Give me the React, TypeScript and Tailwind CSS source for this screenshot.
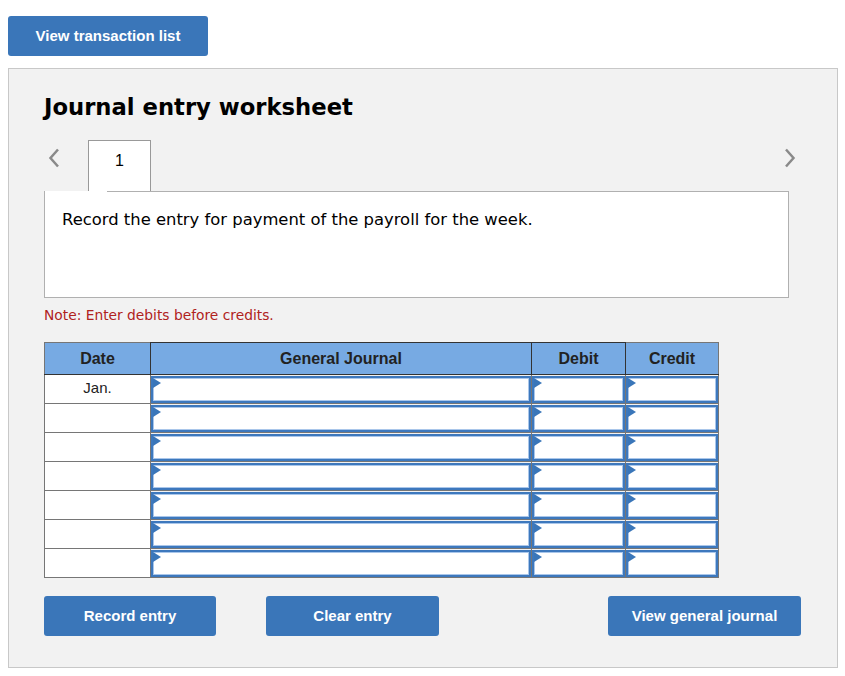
const rows = ["Jan.", "", "", "", "", "", ""];

const Marker = () => (
  <span className="absolute left-0 top-0 h-0 w-0 border-y-[5px] border-l-[8px] border-y-transparent border-l-[#3a76b9]" />
);

const InputCell = () => (
  <td className="border border-[#767676] p-0">
    <div className="relative h-[27px] border-2 border-[#3d78bd] bg-white shadow-[inset_0_0_0_1px_#a9c6ea]">
      <Marker />
    </div>
  </td>
);

const Button = ({ label, className }: { label: string; className?: string }) => (
  <button
    className={
      "h-10 rounded-[3px] bg-[#3a76b9] text-[15px] font-bold text-white font-['Liberation_Sans',Arial,sans-serif] " +
      (className ?? "")
    }
  >
    {label}
  </button>
);

export default function App() {
  return (
    <div className="min-h-[676px] w-[845px] bg-white px-2 pt-4 font-['DejaVu_Sans',Verdana,sans-serif]">
      <Button label="View transaction list" className="w-[200px]" />

      <div className="mt-3 h-[600px] w-[830px] border border-[#c8c8c8] bg-[#f2f2f2] px-[35px] pt-[22px]">
        <h1 className="text-[22.7px] font-bold leading-[32px] text-black">Journal entry worksheet</h1>

        <div className="mt-[17px] flex h-[51px] items-start">
          <span className="ml-[3px] mt-[7px] w-[41px]">
            <svg width="14" height="22" viewBox="0 0 14 22" fill="none">
              <path d="M11 2.5 L3.5 11 L11 19.5" stroke="#8a8a8a" strokeWidth="2.5" />
            </svg>
          </span>
          <div className="flex h-[51px] w-[63px] items-start justify-center border border-b-0 border-[#999] bg-white pt-[8px] font-['Liberation_Sans',Arial,sans-serif] text-[16px] text-black">
            1
          </div>
          <span className="ml-auto mr-[5px] mt-[7px] w-[14px]">
            <svg width="14" height="22" viewBox="0 0 14 22" fill="none">
              <path d="M3 2.5 L10.5 11 L3 19.5" stroke="#8a8a8a" strokeWidth="2.5" />
            </svg>
          </span>
        </div>

        <div className="h-[107px] w-[745px] border border-t-0 border-[#b0b0b0] bg-white px-[17px] pt-[16px]">
          <div className="h-0 -mx-[18px] -mt-[16px] mb-[16px] border-t border-[#b0b0b0] ml-[45px]" />
          <p className="text-[16.4px] leading-[24px] text-black">
            Record the entry for payment of the payroll for the week.
          </p>
        </div>

        <p className="mt-[9px] text-[13.8px] leading-[16px] text-[#b0221d]">Note: Enter debits before credits.</p>

        <table className="mt-[19px] w-[675px] border-collapse border border-[#767676] font-['Liberation_Sans',Arial,sans-serif]">
          <thead>
            <tr className="h-[32px] bg-[#77aae3] text-[16px] font-bold text-[#222]">
              <th className="w-[106px] border border-[#767676] border-r-[#333] border-b-[#333]">Date</th>
              <th className="w-[381px] border border-[#333]">General Journal</th>
              <th className="w-[94px] border border-[#333]">Debit</th>
              <th className="border border-[#767676] border-l-[#333] border-b-[#333]">Credit</th>
            </tr>
          </thead>
          <tbody>
            {rows.map((d, i) => (
              <tr key={i} className="h-[29px]">
                <td className="border border-[#767676] bg-white p-0 pb-[3px] text-center text-[15px] leading-[24px] text-[#222]">
                  {d}
                </td>
                <InputCell />
                <InputCell />
                <InputCell />
              </tr>
            ))}
          </tbody>
        </table>

        <div className="mt-[18px] flex">
          <Button label="Record entry" className="w-[172px]" />
          <Button label="Clear entry" className="ml-[50px] w-[173px]" />
          <Button label="View general journal" className="ml-auto mr-[1px] w-[193px]" />
        </div>
      </div>
    </div>
  );
}
